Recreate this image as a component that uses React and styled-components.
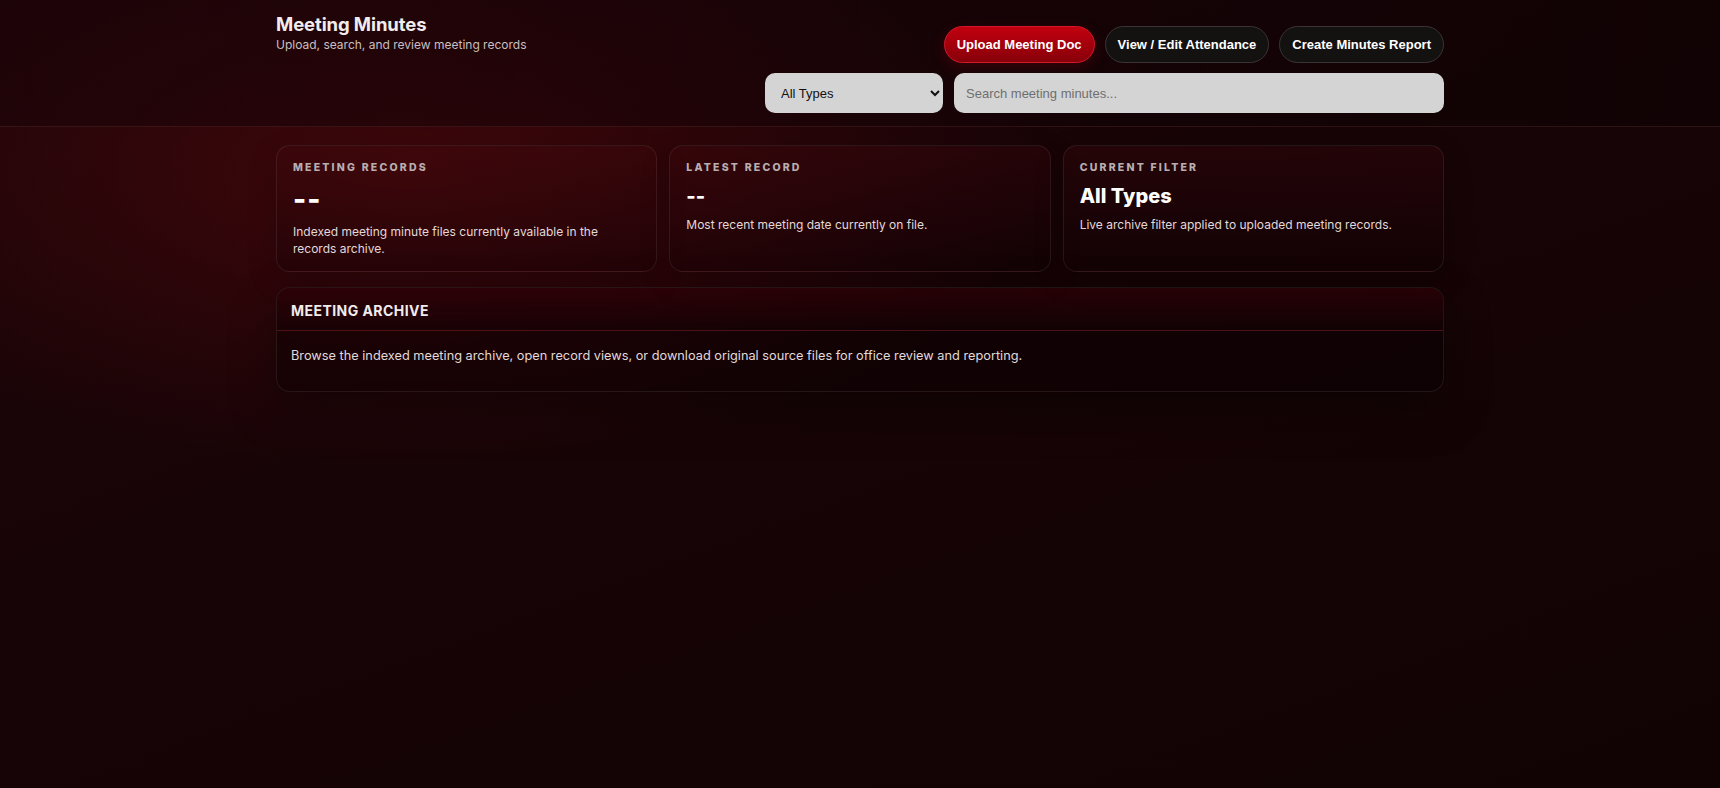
import React from "react";
import styled, { createGlobalStyle } from "styled-components";

const GlobalStyle = createGlobalStyle`
  html, body {
    margin: 0;
    padding: 0;
    min-height: 100%;
  }
  body {
    font-family: Inter, "Liberation Sans", Arial, sans-serif;
    color: #f2ecec;
    background-color: #120304;
    background-image:
      radial-gradient(ellipse 900px 420px at 24% 22%, rgba(120, 10, 18, 0.38), rgba(120, 10, 18, 0) 70%),
      linear-gradient(160deg, #1e0508 0%, #170406 45%, #110304 100%);
    background-attachment: fixed;
    min-height: 100vh;
  }
  * { box-sizing: border-box; }
`;

const stats = [
  {
    label: "Meeting Records",
    value: "--",
    big: true,
    text: "Indexed meeting minute files currently available in the records archive.",
  },
  {
    label: "Latest Record",
    value: "--",
    text: "Most recent meeting date currently on file.",
  },
  {
    label: "Current Filter",
    value: "All Types",
    text: "Live archive filter applied to uploaded meeting records.",
  },
];

const App = () => {
  return (
    <Page>
      <GlobalStyle />
      <Header>
        <HeaderInner>
          <TitleBlock>
            <Title>Meeting Minutes</Title>
            <Subtitle>Upload, search, and review meeting records</Subtitle>
          </TitleBlock>

          <Controls>
            <ButtonRow>
              <PillButton $primary>Upload Meeting Doc</PillButton>
              <PillButton>View / Edit Attendance</PillButton>
              <PillButton>Create Minutes Report</PillButton>
            </ButtonRow>
            <FilterRow>
              <TypeSelect defaultValue="all">
                <option value="all">All Types</option>
                <option value="regular">Regular</option>
                <option value="special">Special</option>
              </TypeSelect>
              <SearchInput placeholder="Search meeting minutes..." />
            </FilterRow>
          </Controls>
        </HeaderInner>
      </Header>

      <Main>
        <StatGrid>
          {stats.map((s) => (
            <StatCard key={s.label}>
              <StatLabel>{s.label}</StatLabel>
              <StatValue $big={s.big}>{s.value}</StatValue>
              <StatText>{s.text}</StatText>
            </StatCard>
          ))}
        </StatGrid>

        <Panel>
          <PanelHeader>
            <PanelTitle>Meeting Archive</PanelTitle>
          </PanelHeader>
          <PanelBody>
            Browse the indexed meeting archive, open record views, or download
            original source files for office review and reporting.
          </PanelBody>
        </Panel>
      </Main>
    </Page>
  );
};

export default App;

// Styled Components
const Page = styled.div`
  min-height: 100vh;
`;

const Header = styled.header`
  background: linear-gradient(90deg, rgba(24, 3, 7, 0.55), rgba(10, 1, 3, 0.45));
  border-bottom: 1px solid rgba(120, 60, 60, 0.28);
  padding: 12px 0 13px;
`;

const HeaderInner = styled.div`
  max-width: 1168px;
  margin: 0 auto;
  display: flex;
  justify-content: space-between;
  align-items: flex-start;
`;

const TitleBlock = styled.div`
  display: flex;
  flex-direction: column;
`;

const Title = styled.h1`
  margin: 0;
  font-size: 18.5px;
  line-height: 24px;
  font-weight: 700;
  color: #f1eded;
  letter-spacing: -0.1px;
`;

const Subtitle = styled.p`
  margin: 1px 0 0;
  font-size: 12px;
  line-height: 16px;
  color: #c9bfc0;
`;

const Controls = styled.div`
  display: flex;
  flex-direction: column;
  align-items: flex-end;
  gap: 10px;
  padding-top: 14px;
`;

const ButtonRow = styled.div`
  display: flex;
  gap: 10px;
`;

const PillButton = styled.button`
  height: 37px;
  padding: 0 12px;
  border-radius: 999px;
  font-family: "Liberation Sans", Arial, sans-serif;
  font-size: 13px;
  font-weight: 700;
  color: #ffffff;
  cursor: pointer;
  border: 1px solid ${(p) => (p.$primary ? "#d4182a" : "#3a3434")};
  background: ${(p) =>
    p.$primary
      ? "linear-gradient(180deg, #c2000f 0%, #a1000c 55%, #86000a 100%)"
      : "#141111"};
  box-shadow: ${(p) =>
    p.$primary ? "0 4px 14px rgba(160, 0, 16, 0.25)" : "none"};
`;

const FilterRow = styled.div`
  display: flex;
  gap: 11px;
`;

const TypeSelect = styled.select`
  width: 178px;
  height: 40px;
  padding: 0 10px 0 12px;
  border: none;
  border-radius: 10px;
  background-color: #d4d4d4;
  color: #111111;
  font-family: "Liberation Sans", Arial, sans-serif;
  font-size: 13px;
  outline: none;
`;

const SearchInput = styled.input`
  width: 490px;
  height: 40px;
  padding: 0 12px;
  border: none;
  border-radius: 10px;
  background: #d4d4d4;
  color: #111111;
  font-family: "Liberation Sans", Arial, sans-serif;
  font-size: 13px;
  outline: none;

  &::placeholder {
    color: #6f6f6f;
  }
`;

const Main = styled.main`
  max-width: 1168px;
  margin: 0 auto;
  padding: 18px 0 40px;
`;

const StatGrid = styled.div`
  display: grid;
  grid-template-columns: repeat(3, 1fr);
  gap: 12px;
`;

const StatCard = styled.div`
  padding: 15px 16px 14px 16px;
  border-radius: 14px;
  border: 1px solid rgba(255, 255, 255, 0.08);
  background: linear-gradient(180deg, rgba(70, 8, 14, 0.28) 0%, rgba(10, 0, 3, 0.28) 100%);
  box-shadow: 0 10px 30px rgba(0, 0, 0, 0.18);
`;

const StatLabel = styled.div`
  font-size: 10.5px;
  line-height: 14px;
  font-weight: 800;
  letter-spacing: 2.2px;
  text-transform: uppercase;
  color: #b9afb0;
`;

const StatValue = styled.div`
  margin-top: 9px;
  font-size: ${(p) => (p.$big ? "28px" : "20px")};
  line-height: ${(p) => (p.$big ? "31px" : "24px")};
  font-weight: 800;
  color: #ffffff;
  letter-spacing: ${(p) => (p.$big ? "1px" : "0")};
`;

const StatText = styled.p`
  margin: 8px 0 0;
  font-size: 12px;
  line-height: 17px;
  color: #e2d9d9;
`;

const Panel = styled.section`
  margin-top: 15px;
  border-radius: 14px;
  border: 1px solid rgba(255, 255, 255, 0.08);
  overflow: hidden;
  background: rgba(8, 0, 2, 0.45);
  box-shadow: 0 18px 46px rgba(0, 0, 0, 0.35);
`;

const PanelHeader = styled.div`
  padding: 14px 14px 10px;
  border-bottom: 1px solid rgba(150, 50, 55, 0.32);
  background: linear-gradient(180deg, rgba(60, 3, 10, 0.55) 0%, rgba(20, 2, 5, 0.3) 100%);
`;

const PanelTitle = styled.h2`
  margin: 0;
  font-size: 14px;
  line-height: 18px;
  font-weight: 700;
  letter-spacing: 0.45px;
  text-transform: uppercase;
  color: #f1ebeb;
`;

const PanelBody = styled.p`
  margin: 0;
  padding: 16px 14px 26px;
  font-size: 12.75px;
  line-height: 18px;
  color: #e2d9d9;
`;
